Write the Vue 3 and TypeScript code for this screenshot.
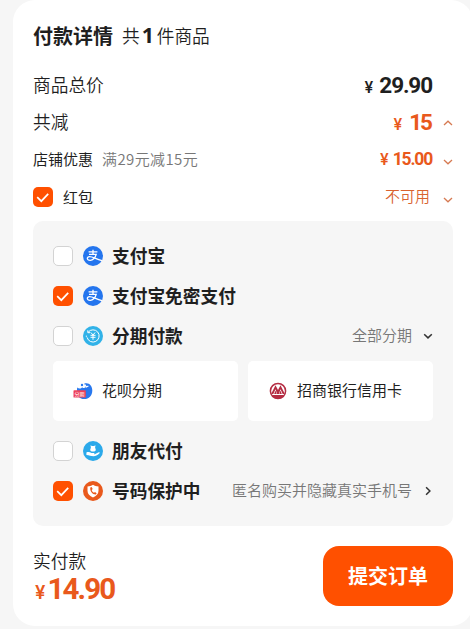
<script setup lang="ts">
import { ref } from 'vue'

type IconName = 'alipay' | 'instalment' | 'friend' | 'shield'

interface PayOption {
  id: string
  label: string
  icon: IconName
  checked: boolean
  note?: string
  arrow?: 'down' | 'right'
  cards?: boolean
}

const coupon = ref(true)
const options = ref<PayOption[]>([
  { id: 'alipay', label: '支付宝', icon: 'alipay', checked: false },
  { id: 'quick', label: '支付宝免密支付', icon: 'alipay', checked: true },
  { id: 'instalment', label: '分期付款', icon: 'instalment', checked: false, note: '全部分期', arrow: 'down', cards: true },
  { id: 'friend', label: '朋友代付', icon: 'friend', checked: false },
  { id: 'shield', label: '号码保护中', icon: 'shield', checked: true, note: '匿名购买并隐藏真实手机号', arrow: 'right' },
])
</script>

<template>
  <main class="page">
    <section class="card">
      <header class="title">
        <h1>付款详情</h1>
        <span class="count">共<b>1</b>件商品</span>
      </header>

      <div class="row total">
        <span class="name">商品总价</span>
        <span class="price dark"><i>¥</i>29.90</span>
      </div>
      <div class="row cut">
        <span class="name">共减</span>
        <span class="price tight"><i>¥</i>15</span>
        <svg class="chev" viewBox="0 0 10 6"><path d="M1 5 5 1.2 9 5" /></svg>
      </div>
      <div class="row shop">
        <span class="small">店铺优惠</span>
        <span class="hint">满29元减15元</span>
        <span class="price mid"><i>¥</i>15.00</span>
        <svg class="chev low" viewBox="0 0 10 6"><path d="M1 1 5 4.8 9 1" /></svg>
      </div>
      <div class="row packet">
        <button class="check" :class="{ on: coupon }" @click="coupon = !coupon">
          <svg v-if="coupon" viewBox="0 0 20 20"><path d="M4.2 10.2 8.3 14.2 15.2 6.8" /></svg>
        </button>
        <span class="small packet-name">红包</span>
        <span class="unavailable">不可用</span>
        <svg class="chev low" viewBox="0 0 10 6"><path d="M1 1 5 4.8 9 1" /></svg>
      </div>

      <div class="panel">
        <template v-for="o in options" :key="o.id">
          <div class="option">
            <button class="check" :class="{ on: o.checked }" @click="o.checked = !o.checked">
              <svg v-if="o.checked" viewBox="0 0 20 20"><path d="M4.2 10.2 8.3 14.2 15.2 6.8" /></svg>
            </button>
            <svg v-if="o.icon === 'alipay'" class="icon" viewBox="0 0 20 20">
              <circle cx="10" cy="10" r="10" fill="#2475ee" />
              <g fill="none" stroke="#fff" stroke-width="1.3">
                <path d="M5.6 5.9h8.8M10 3.8v4.4M6 8.4h7.2c-.7 2.8-3.2 6-6 6-3.7 0-3.7-3.8-.6-3.8 3.2 0 6 2.4 12.4 4" />
              </g>
            </svg>
            <svg v-else-if="o.icon === 'instalment'" class="icon" viewBox="0 0 20 20">
              <circle cx="10" cy="10" r="10" fill="#31b2e8" />
              <g fill="none" stroke="#fff" stroke-width="1">
                <path d="M5.2 6.2a6.1 6.1 0 1 1-1.1 5.2M4 10.2H2.8M4.8 4.3v2.4h2.4" />
                <path d="M7.9 6.5 10 9l2.1-2.5M7.5 9.3h5M7.5 11.3h5M10 9v4.8" />
              </g>
            </svg>
            <svg v-else-if="o.icon === 'friend'" class="icon" viewBox="0 0 20 20">
              <circle cx="10" cy="10" r="10" fill="#2ba9ea" />
              <path d="M7.5 4.3 9 5.1h2l1.5-.8-.4 2.1.8 2.8-1.5 1.3H8.6L7.1 9.2l.8-2.8Z" fill="#fff" />
              <path d="M3.4 11.5c2-.9 3.7-.3 5 .6h2.5c.8 0 .8 1.1 0 1.1H8.5h3.2l4-1.9c1-.3 1.4.6.6 1.2-2.1 1.7-3.6 2.8-5.8 2.8-2.5 0-4.3-1-7.1-1.2Z" fill="#fff" />
            </svg>
            <svg v-else class="icon" viewBox="0 0 20 20">
              <circle cx="10" cy="10" r="10" fill="#e9591c" />
              <path d="M10 3.7c1.7 1.2 3.4 1.6 5.5 1.8v4.2c0 3.3-2.2 5.3-5.5 6.8-3.3-1.5-5.5-3.5-5.5-6.8V5.5c2.1-.2 3.8-.6 5.5-1.8Z" fill="#fff" />
              <path d="m7.3 6.5 1.3-.5 1.1 2-1 .9c.4 1.3 1.1 2.2 2.3 2.8l1-.7 1.6 1.3-.6 1.2c-3.5.3-6.3-3.5-5.7-7Z" fill="#e9591c" />
            </svg>
            <span class="label">{{ o.label }}</span>
            <span v-if="o.note" class="note">{{ o.note }}</span>
            <svg v-if="o.arrow === 'down'" class="go" viewBox="0 0 10 10"><path d="M1.2 3.2 5 6.9 8.8 3.2" /></svg>
            <svg v-if="o.arrow === 'right'" class="go" viewBox="0 0 10 10"><path d="M3.1 1.2 6.9 5 3.1 8.8" /></svg>
          </div>
          <div v-if="o.cards" class="plans">
            <div class="plan">
              <svg class="brand" viewBox="0 0 20 20">
                <path d="M4.2 6.5c1.6 1.3 3.9 1.2 5-.3.8 1.1 2.5 1.2 3.4.1L11.3 2.6c5-1.4 8 2.4 8 6.9 0 5-3.4 8.6-8 8.6-4.7 0-7.7-3.7-7.4-8.2Z" fill="#2878ee" />
                <path d="M11.9 3.6 13.3 6l2.1-1" fill="none" stroke="#fff" stroke-width="1.2" />
                <circle cx="9" cy="4" r="1.2" fill="#2878ee" />
                <rect x="0.5" y="9.3" width="12.3" height="7.2" rx=".6" fill="#ee4058" />
                <text x="1.6" y="14.8" class="tag">分期</text>
              </svg>
              <span>花呗分期</span>
            </div>
            <div class="plan">
              <svg class="brand" viewBox="0 0 20 20">
                <circle cx="10" cy="10" r="7.6" fill="#fff" stroke="#b52d43" stroke-width="1.5" />
                <path d="M3.1 13 7.5 4.3 10 9l2.5-4.7 4.4 8.7h-2.2l-2.2-4.7L10.9 13H9.1L7.5 8.3 5.3 13Z" fill="#b52d43" />
                <path d="m7.5 9.5 1.2 3.5H6.2Zm5 0 1.3 3.5h-2.5ZM4 14.1h12c-1.3 2.5-3.3 3.8-6 3.8s-4.7-1.3-6-3.8Z" fill="#b52d43" />
              </svg>
              <span>招商银行信用卡</span>
            </div>
          </div>
        </template>
      </div>

      <footer class="footer">
        <div class="due">
          <span>实付款</span>
          <strong><i>¥</i>14.90</strong>
        </div>
        <button class="submit">提交订单</button>
      </footer>
    </section>
  </main>
</template>

<style>
body {
  margin: 0;
  background: #f6f6f6;
  overflow: hidden;
}
</style>

<style scoped>
.page {
  box-sizing: border-box;
  width: 470px;
  height: 629px;
  padding-left: 13px;
  overflow: hidden;
  background: #f6f6f6;
  color: #1f1f1f;
  font-family: "Noto Sans CJK SC", sans-serif;
}
button {
  border: 0;
  padding: 0;
  font-family: inherit;
}
i {
  font-style: normal;
}
svg {
  display: block;
  flex: none;
}
.card {
  box-sizing: border-box;
  width: 460px;
  height: 626px;
  padding: 16px 20px 20px;
  border-radius: 22px;
  background: #fff;
}
.title {
  display: flex;
  align-items: center;
  height: 40px;
  gap: 9px;
}
h1 {
  margin: 0;
  font-size: 20px;
  line-height: 40px;
  font-weight: 700;
}
.count {
  display: flex;
  align-items: center;
  padding-bottom: 2px;
  font-size: 17.7px;
  font-weight: 350;
  line-height: 40px;
}
.count b {
  width: 11px;
  margin: 0 4px 0 2px;
  font: 700 21.5px/38px "Open Sans", sans-serif;
}
.row {
  display: flex;
  align-items: center;
  height: 38px;
}
.total {
  margin-top: 10px;
  padding-right: 20px;
}
.cut {
  height: 36px;
}
.name {
  padding-bottom: 2px;
  font-size: 17.7px;
  font-weight: 350;
}
.small {
  padding-bottom: 2px;
  font-size: 15px;
}
.hint {
  margin-left: 9px;
  padding-bottom: 2px;
  color: #777;
  font-size: 15px;
  font-weight: 350;
  letter-spacing: 0.4px;
}
.price {
  margin-left: auto;
  color: #e9591c;
  font: 700 22.5px/30px Roboto, sans-serif;
  letter-spacing: -1.1px;
}
.price i {
  margin-right: 6px;
  font: 600 15.5px/20px Inter, sans-serif;
  letter-spacing: 0;
}
.dark {
  margin-right: 1px;
  color: #1f1f1f;
}
.tight {
  letter-spacing: -2px;
}
.tight + .chev {
  margin-left: 12px;
}
.tight i {
  margin-right: 7px;
}
.mid {
  font-size: 17.5px;
  letter-spacing: -1.2px;
}
.mid i {
  margin-right: 4px;
}
.chev {
  width: 10px;
  height: 6px;
  margin: 2px 0 0 11px;
  fill: none;
  stroke: #d67a52;
  stroke-width: 1.3;
}
.low {
  margin-top: 6px;
}
.unavailable {
  margin-left: auto;
  padding-bottom: 3px;
  color: #d9622f;
  font-size: 15px;
  font-weight: 350;
}
.packet .chev {
  margin-left: 13px;
}
.packet-name {
  margin-left: 10px;
}
.check {
  box-sizing: border-box;
  flex: none;
  width: 20px;
  height: 20px;
  border: 1px solid #d3d3d3;
  border-radius: 5px;
  background: #fff;
}
.check.on {
  border: 0;
  background: #ff5000;
}
.check svg {
  width: 20px;
  height: 20px;
  fill: none;
  stroke: #fff;
  stroke-width: 1.7;
}
.panel {
  box-sizing: border-box;
  width: 420px;
  height: 305px;
  margin-top: 5px;
  padding: 15px 20px;
  border-radius: 10px;
  background: #f6f6f6;
}
.option {
  display: flex;
  align-items: center;
  height: 40px;
}
.icon {
  width: 20px;
  height: 20px;
  margin: 0 9px 0 10px;
}
.label {
  padding-bottom: 2px;
  font-size: 17.7px;
  font-weight: 700;
}
.note {
  margin-left: auto;
  padding-bottom: 3px;
  color: #777;
  font-size: 15px;
  font-weight: 350;
}
.go {
  width: 10px;
  height: 10px;
  margin-left: 11px;
  fill: none;
  stroke: #333;
  stroke-width: 1.5;
}
.plans {
  display: grid;
  grid-template-columns: 185px 185px;
  gap: 10px;
  padding: 5px 0 10px;
}
.plan {
  display: flex;
  align-items: center;
  height: 60px;
  padding-left: 20px;
  border-radius: 5px;
  background: #fff;
  font-size: 15px;
}
.plan span {
  padding-bottom: 3px;
}
.brand {
  width: 20px;
  height: 20px;
  margin-right: 9px;
}
.tag {
  fill: #fff;
  font-size: 5px;
}
.footer {
  display: flex;
  align-items: center;
  justify-content: space-between;
  height: 60px;
  margin-top: 20px;
}
.due {
  display: flex;
  flex-direction: column;
  padding-bottom: 3px;
  font-size: 17.7px;
  font-weight: 350;
  line-height: 28px;
}
.due strong {
  padding-left: 2px;
  color: #e9591c;
  font: 700 29.5px/30px Roboto, sans-serif;
  letter-spacing: -1.9px;
}
.due i {
  margin-right: 2px;
  font: 600 18.5px/20px Inter, sans-serif;
  letter-spacing: 0;
}
.submit {
  width: 130px;
  height: 60px;
  padding-bottom: 2px;
  border-radius: 16px;
  background: #ff5000;
  color: #fff;
  font-size: 20px;
  font-weight: 700;
}
</style>
